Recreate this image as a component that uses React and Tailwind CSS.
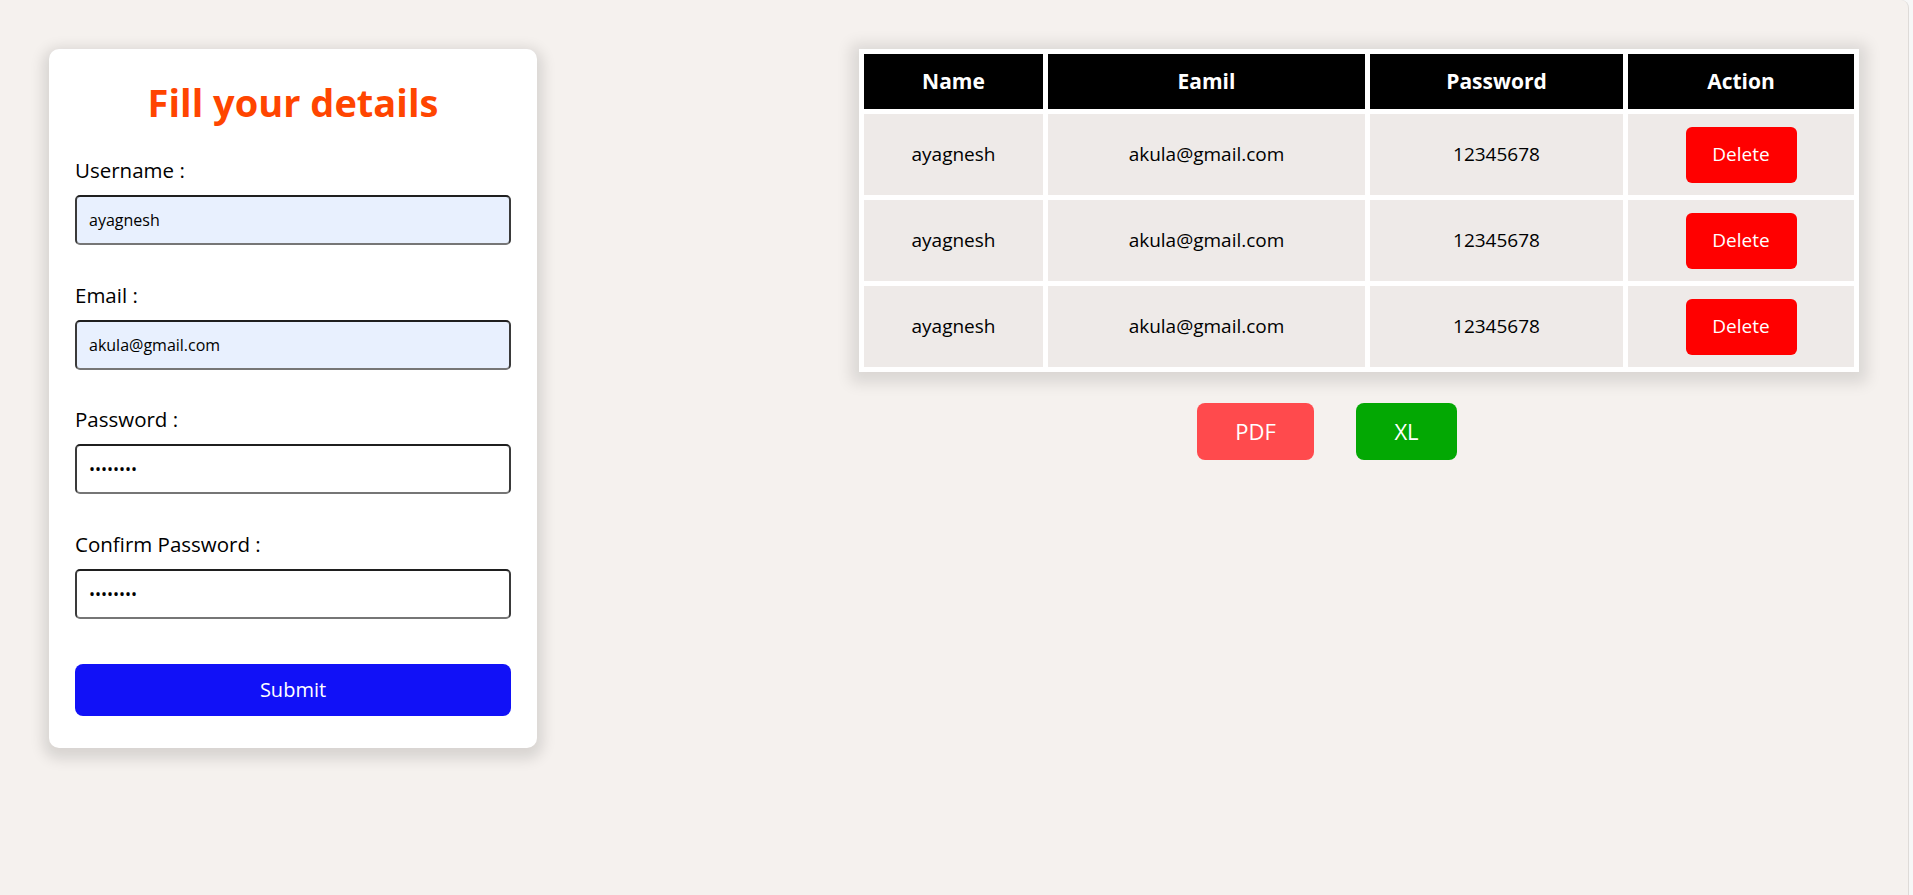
import React from 'react';

const rows = [
  { name: 'ayagnesh', email: 'akula@gmail.com', password: '12345678' },
  { name: 'ayagnesh', email: 'akula@gmail.com', password: '12345678' },
  { name: 'ayagnesh', email: 'akula@gmail.com', password: '12345678' },
];

function Field({ label, type, value, autofill, first }) {
  return (
    <div className={first ? 'mt-[29.7px]' : 'mt-[35.67px]'}>
      <label className="block text-[20.5px] leading-[28px] text-black">{label}</label>
      <input
        type={type}
        defaultValue={value}
        readOnly
        className={`mt-[11px] block w-full h-[50px] px-[12px] text-[16px] text-black rounded-[5px] border-2 border-t-[#1f1f1f] border-x-[#3a3a3a] border-b-[#767676] outline-none ${
          autofill ? 'bg-[#e8f0fe]' : 'bg-white'
        }`}
      />
    </div>
  );
}

export default function App() {
  return (
    <div className="flex w-[1913px] h-[895px] bg-[#f7f7f7] font-['Open_Sans',sans-serif]">
      <div className="w-[1909px] h-full bg-[#f5f1ee] rounded-tr-[8px] border-r border-[#dedbd8] flex justify-between items-start px-[49px] pt-[49px]">
        {/* Form card */}
        <div className="w-[488px] h-[699px] bg-white rounded-[10px] shadow-[0_5px_14px_6px_rgba(0,0,0,0.12)] px-[26px] pt-[29.3px]">
          <h1 className="text-center text-[38px] leading-[48px] font-bold text-[#ff4500]">Fill your details</h1>
          <Field first label="Username :" type="text" value="ayagnesh" autofill />
          <Field label="Email :" type="text" value="akula@gmail.com" autofill />
          <Field label="Password :" type="password" value="12345678" />
          <Field label="Confirm Password :" type="password" value="12345678" />
          <button className="mt-[45px] w-full h-[52px] rounded-[8px] bg-[#1111f7] text-white text-[20px]">Submit</button>
        </div>

        {/* Table side */}
        <div className="w-[1000px]">
          <table className="table-fixed w-[1000px] bg-white border-separate border-spacing-[5px] shadow-[0_3px_14px_8px_rgba(0,0,0,0.11)]">
            <thead>
              <tr>
                <th className="w-[179px] h-[55px] p-0 bg-black text-white text-[21px] font-bold">Name</th>
                <th className="w-[317px] h-[55px] p-0 bg-black text-white text-[21px] font-bold">Eamil</th>
                <th className="w-[253px] h-[55px] p-0 bg-black text-white text-[21px] font-bold">Password</th>
                <th className="w-[226px] h-[55px] p-0 bg-black text-white text-[21px] font-bold">Action</th>
              </tr>
            </thead>
            <tbody>
              {rows.map((r, i) => (
                <tr key={i}>
                  <td className="h-[81px] p-0 bg-[#eeeae8] text-center text-[19px] text-black">{r.name}</td>
                  <td className="h-[81px] p-0 bg-[#eeeae8] text-center text-[19px] text-black">{r.email}</td>
                  <td className="h-[81px] p-0 bg-[#eeeae8] text-center text-[19px] text-black">{r.password}</td>
                  <td className="h-[81px] p-0 bg-[#eeeae8] text-center">
                    <button className="h-[56px] w-[111px] rounded-[6px] bg-[#ff0000] text-white text-[19px]">Delete</button>
                  </td>
                </tr>
              ))}
            </tbody>
          </table>
          <div className="flex gap-[42px] pl-[338px] mt-[31px]">
            <button className="h-[57px] w-[117px] rounded-[8px] bg-[#ff4a4d] text-white text-[22px]">PDF</button>
            <button className="h-[57px] w-[101px] rounded-[8px] bg-[#03a803] text-white text-[22px]">XL</button>
          </div>
        </div>
      </div>
    </div>
  );
}
